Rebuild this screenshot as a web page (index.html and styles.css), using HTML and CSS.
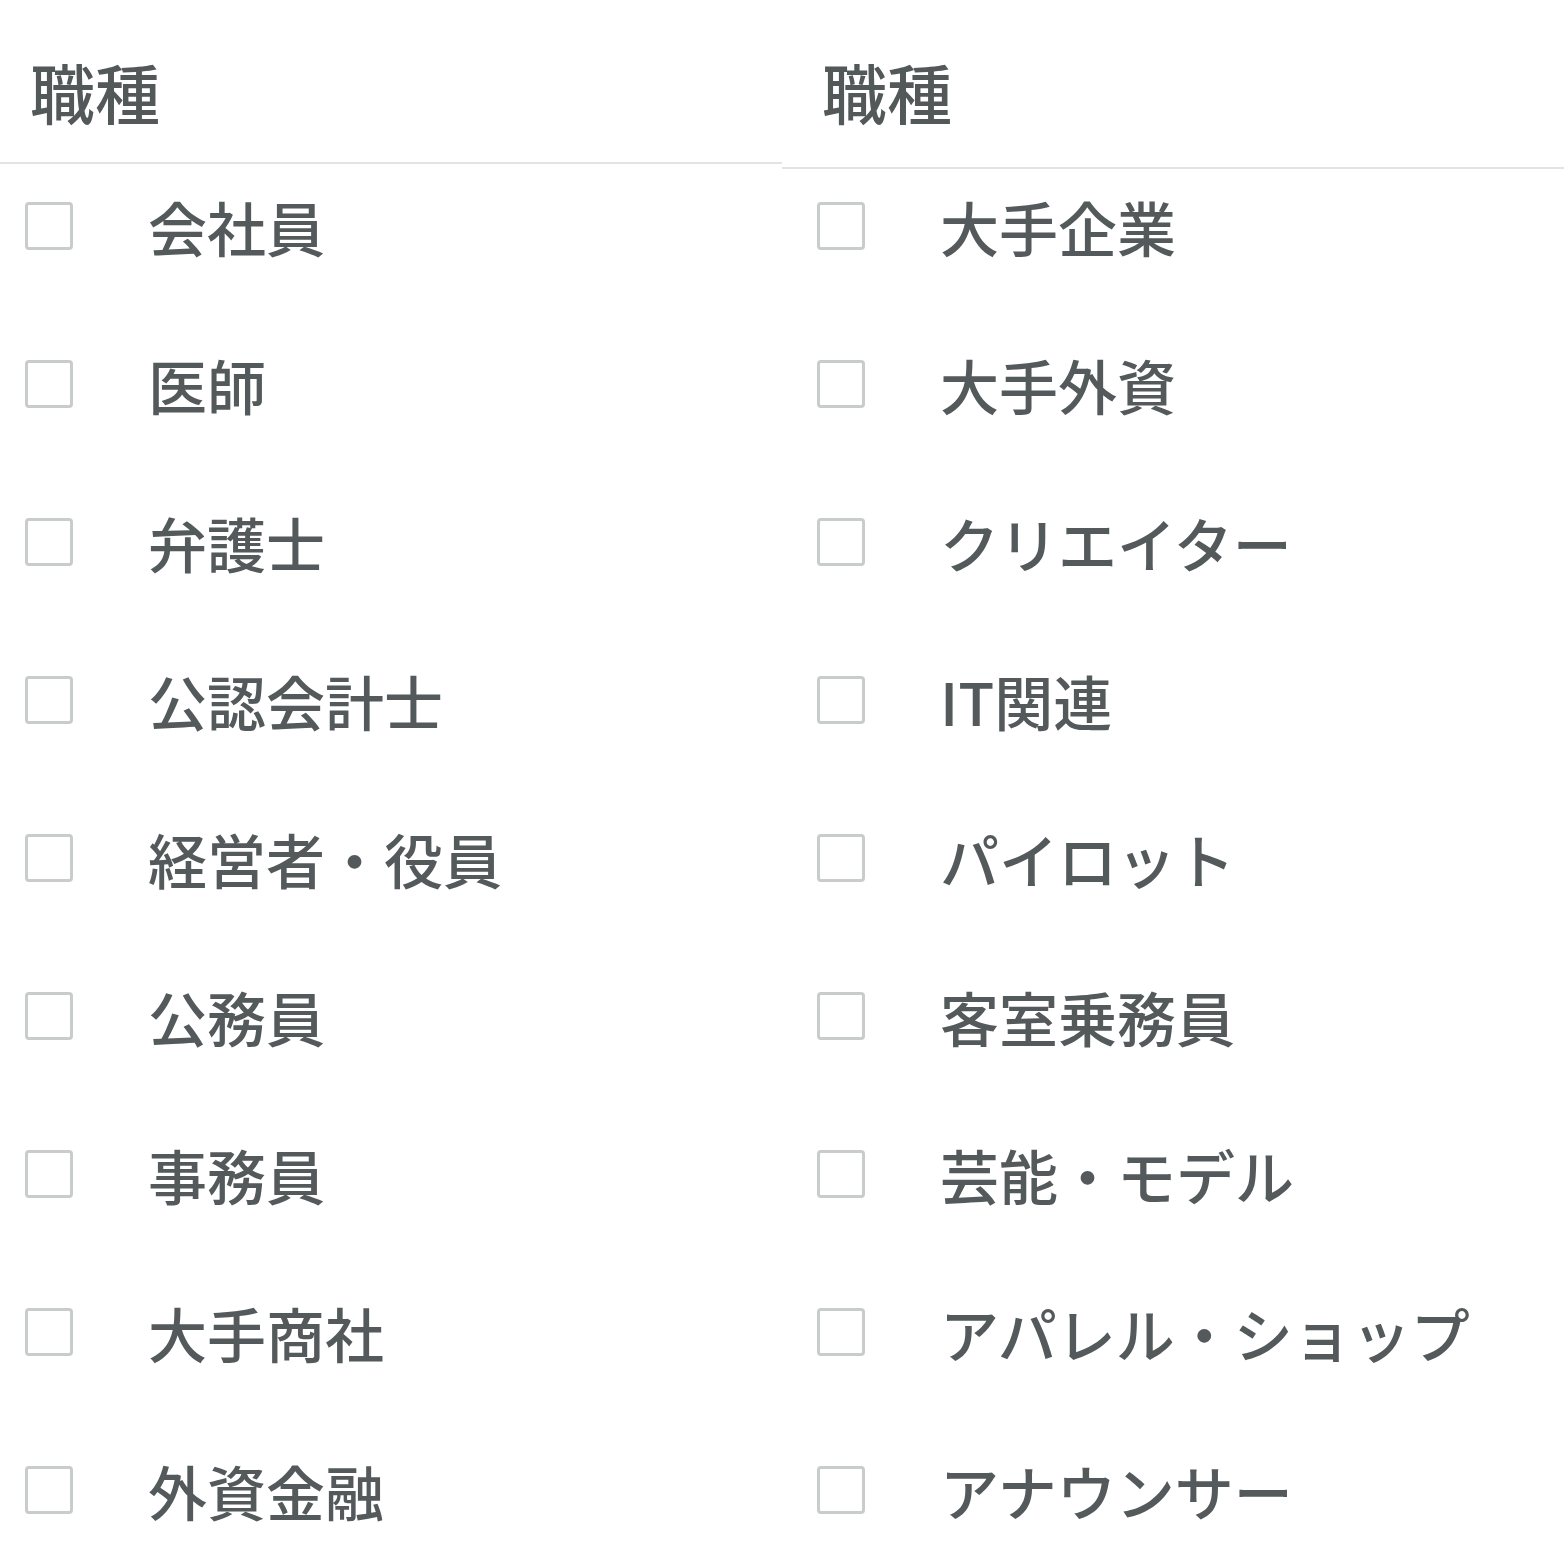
FILE: index.html
```html
<!DOCTYPE html>
<html lang="ja">
<head>
<meta charset="utf-8">
<link rel="stylesheet" href="styles.css">
</head>
<body>
<div class="page">
  <section class="col col-left">
    <div class="head"><h2 class="title">職種</h2></div>
    <ul class="list">
      <li class="item"><span class="box"></span><span class="label">会社員</span></li>
      <li class="item"><span class="box"></span><span class="label">医師</span></li>
      <li class="item"><span class="box"></span><span class="label">弁護士</span></li>
      <li class="item"><span class="box"></span><span class="label">公認会計士</span></li>
      <li class="item"><span class="box"></span><span class="label">経営者・役員</span></li>
      <li class="item"><span class="box"></span><span class="label">公務員</span></li>
      <li class="item"><span class="box"></span><span class="label">事務員</span></li>
      <li class="item"><span class="box"></span><span class="label">大手商社</span></li>
      <li class="item"><span class="box"></span><span class="label">外資金融</span></li>
    </ul>
  </section>
  <section class="col col-right">
    <div class="head"><h2 class="title">職種</h2></div>
    <ul class="list">
      <li class="item"><span class="box"></span><span class="label">大手企業</span></li>
      <li class="item"><span class="box"></span><span class="label">大手外資</span></li>
      <li class="item"><span class="box"></span><span class="label">クリエイター</span></li>
      <li class="item"><span class="box"></span><span class="label">IT関連</span></li>
      <li class="item"><span class="box"></span><span class="label">パイロット</span></li>
      <li class="item"><span class="box"></span><span class="label">客室乗務員</span></li>
      <li class="item"><span class="box"></span><span class="label">芸能・モデル</span></li>
      <li class="item"><span class="box"></span><span class="label">アパレル・ショップ</span></li>
      <li class="item"><span class="box"></span><span class="label">アナウンサー</span></li>
    </ul>
  </section>
</div>
</body>
</html>
```
FILE: styles.css
```css
* { box-sizing: border-box; }
html, body {
  margin: 0;
  padding: 0;
  background: #ffffff;
}
body {
  font-family: "Noto Sans CJK JP", "Noto Sans", sans-serif;
  color: #545a5b;
}
.page {
  display: flex;
  width: 1564px;
  height: 1564px;
  overflow: hidden;
}
.col {
  width: 782px;
  flex: none;
}
.head {
  height: 164px;
  border-bottom: 2px solid #e2e4e4;
  display: flex;
  align-items: center;
  padding-left: 30px;
}
.title {
  margin: 0;
  font-size: 65px;
  font-weight: 500;
  line-height: 1;
  color: #535959;
  position: relative;
  top: 10px;
}
.col-right .head {
  height: 169px;
  padding-left: 40px;
}
.col-right .title { top: 8px; }
.list {
  list-style: none;
  margin: 0;
  padding: 38px 0 0 25px;
  display: flex;
  flex-direction: column;
  gap: 110px;
}
.col-right .list {
  padding-top: 33px;
  padding-left: 35px;
}
.item {
  display: flex;
  align-items: center;
  height: 48px;
}
.box {
  width: 48px;
  height: 48px;
  border: 3px solid #c9cccc;
  border-radius: 4px;
  flex: none;
}
.label {
  margin-left: 75px;
  font-size: 59px;
  font-weight: 500;
  line-height: 1;
  white-space: nowrap;
  color: #545a5b;
}
```
